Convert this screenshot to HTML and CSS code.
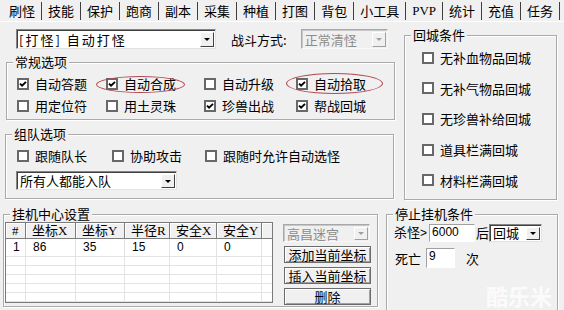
FILE: index.html
```html
<!DOCTYPE html>
<html lang="zh-CN">
<head>
  <meta charset="UTF-8">
  <title>刷怪设置</title>
  <link rel="stylesheet" href="styles.css">
</head>
<body>

<div class="window">
  <div class="tabs">
    <span class="tab active">刷怪</span>
    <span class="tab">技能</span>
    <span class="tab">保护</span>
    <span class="tab">跑商</span>
    <span class="tab">副本</span>
    <span class="tab">采集</span>
    <span class="tab">种植</span>
    <span class="tab">打图</span>
    <span class="tab">背包</span>
    <span class="tab">小工具</span>
    <span class="tab latin">PVP</span>
    <span class="tab">统计</span>
    <span class="tab">充值</span>
    <span class="tab">任务</span>
  </div>

  <div class="upper">
    <div class="left-col">
      <div class="fight-row">
        <div class="combo main-mode"><span class="val">[打怪]&nbsp;自动打怪</span><span class="drop"></span></div>
        <span class="fight-label">战斗方式:</span>
        <div class="combo off fight-mode"><span class="val">正常清怪</span><span class="drop"></span></div>
      </div>

      <fieldset class="group normal">
        <legend>常规选项</legend>
        <div class="opt-grid">
          <label class="chk"><span class="box on"><svg viewBox="0 0 8 8"><path d="M1 3.6 3.1 5.7 7 1.8"/></svg></span>自动答题</label>
          <label class="chk mark-a"><span class="box on"><svg viewBox="0 0 8 8"><path d="M1 3.6 3.1 5.7 7 1.8"/></svg></span>自动合成</label>
          <label class="chk"><span class="box"></span>自动升级</label>
          <label class="chk mark-b"><span class="box on"><svg viewBox="0 0 8 8"><path d="M1 3.6 3.1 5.7 7 1.8"/></svg></span>自动拾取</label>
          <label class="chk"><span class="box"></span>用定位符</label>
          <label class="chk"><span class="box"></span>用土灵珠</label>
          <label class="chk"><span class="box on"><svg viewBox="0 0 8 8"><path d="M1 3.6 3.1 5.7 7 1.8"/></svg></span>珍兽出战</label>
          <label class="chk"><span class="box on"><svg viewBox="0 0 8 8"><path d="M1 3.6 3.1 5.7 7 1.8"/></svg></span>帮战回城</label>
        </div>
      </fieldset>

      <fieldset class="group team">
        <legend>组队选项</legend>
        <div class="team-body">
          <div class="team-grid">
            <label class="chk"><span class="box"></span>跟随队长</label>
            <label class="chk"><span class="box"></span>协助攻击</label>
            <label class="chk"><span class="box"></span>跟随时允许自动选怪</label>
          </div>
          <div class="combo team-mode"><span class="val">所有人都能入队</span><span class="drop"></span></div>
        </div>
      </fieldset>
    </div>

    <fieldset class="group back">
      <legend>回城条件</legend>
      <div class="back-list">
        <label class="chk"><span class="box"></span>无补血物品回城</label>
        <label class="chk"><span class="box"></span>无补气物品回城</label>
        <label class="chk"><span class="box"></span>无珍兽补给回城</label>
        <label class="chk"><span class="box"></span>道具栏满回城</label>
        <label class="chk"><span class="box"></span>材料栏满回城</label>
      </div>
    </fieldset>
  </div>

  <div class="lower">
    <fieldset class="group hang">
      <legend>挂机中心设置</legend>
      <div class="hang-body">
        <div class="list">
          <div class="list-row head">
            <span>#</span><span>坐标X</span><span>坐标Y</span><span>半径R</span><span>安全X</span><span>安全Y</span><span></span>
          </div>
          <div class="list-row item">
            <span>1</span><span>86</span><span>35</span><span>15</span><span>0</span><span>0</span><span></span>
          </div>
          <div class="list-row fill">
            <span></span><span></span><span></span><span></span><span></span><span></span><span></span>
          </div>
        </div>
        <div class="hang-side">
          <div class="combo off map"><span class="val">高昌迷宫</span><span class="drop"></span></div>
          <button class="btn">添加当前坐标</button>
          <button class="btn">插入当前坐标</button>
          <button class="btn">删除</button>
        </div>
      </div>
    </fieldset>

    <fieldset class="group stop">
      <legend>停止挂机条件</legend>
      <div class="stop-row kill">
        <span class="kill-label">杀怪<span class="gt">&gt;</span></span>
        <span class="field kill-count">6000</span>
        <span class="after">后</span>
        <div class="combo then"><span class="val">回城</span><span class="drop"></span></div>
      </div>
      <div class="stop-row death">
        <span>死亡</span>
        <span class="field death-count">9</span>
        <span class="times">次</span>
      </div>
    </fieldset>
  </div>

  <div class="watermark">酷乐米</div>
</div>

</body>
</html>
```

FILE: styles.css
```css
* {
  box-sizing: border-box;
}
body {
  margin: 0;
  font-family: "Noto Sans CJK SC", "Noto Sans", sans-serif;
  font-size: 13px;
  line-height: 13px;
  color: #000;
  background: #f0f0f0;
}
.window {
  position: relative;
  width: 564px;
  height: 310px;
  overflow: hidden;
}

/* tab strip */
.tabs {
  display: flex;
  height: 22px;
  border-bottom: 1px solid #fff;
}
.tab {
  margin-top: 2px;
  height: 18px;
  line-height: 18px;
  padding: 0 6px;
  border-right: 1px solid #3f3f3f;
  white-space: nowrap;
}
.tab.active {
  padding-left: 9px;
}
.tab.latin {
  font-family: "Liberation Serif", serif;
}

/* group boxes */
.group {
  margin: 0;
  padding: 0;
  min-width: 0;
  border: 1px solid #aaaaaa;
  box-shadow: inset 1px 1px 0 #fff, 1px 1px 0 #fff;
}
.group legend {
  margin-left: 6px;
  padding: 0 2px;
  height: 14px;
  line-height: 14px;
  background: #f0f0f0;
}

/* checkboxes */
.chk {
  position: relative;
  justify-self: start;
  display: flex;
  align-items: center;
  gap: 6px;
  height: 13px;
  white-space: nowrap;
}
.box {
  flex: none;
  display: flex;
  width: 12px;
  height: 12px;
  border: 2px solid #686868;
  background: #fff;
}
.box svg {
  width: 8px;
  height: 8px;
  fill: none;
  stroke: #000;
  stroke-width: 1.9;
}
.mark-a::after,
.mark-b::after {
  content: "";
  position: absolute;
  border: 1px solid #b24a4f;
  border-radius: 50%;
}
.mark-a::after {
  left: -10px;
  right: -9px;
  top: -1px;
  bottom: -3px;
}
.mark-b::after {
  left: -10px;
  right: -17px;
  top: -4px;
  bottom: -4px;
}

/* combo boxes */
.combo {
  display: flex;
  flex: none;
  background: #fff;
  border: 1px solid;
  border-color: #848484 #e2e2e2 #e2e2e2 #848484;
  box-shadow: inset 1px 1px 0 #404040;
}
.combo .val {
  flex: 1;
  display: flex;
  align-items: center;
  padding-left: 3px;
  white-space: nowrap;
  overflow: hidden;
}
.combo .drop {
  flex: none;
  display: flex;
  align-items: center;
  justify-content: center;
  width: 14px;
  margin: 2px 1px 1px 0;
  background: #f0f0f0;
  border: 1px solid;
  border-color: #fff #404040 #404040 #fff;
}
.combo .drop::before {
  content: "";
  border-left: 3px solid transparent;
  border-right: 3px solid transparent;
  border-top: 3px solid #000;
}
.combo.off {
  background: #f0f0f0;
  color: #8c8c8c;
  border-color: #a8a8a8 #f8f8f8 #f8f8f8 #a8a8a8;
  box-shadow: inset 1px 1px 0 #c8c8c8;
}
.combo.off .drop {
  border-color: #fff #a0a0a0 #a0a0a0 #fff;
}
.combo.off .drop::before {
  border-top-color: #a0a0a0;
}

/* upper part */
.upper {
  display: flex;
  align-items: flex-start;
}
.left-col {
  width: 395px;
}
.fight-row {
  display: flex;
  align-items: center;
  height: 20px;
  margin-top: 7px;
  padding-left: 16px;
}
.main-mode {
  width: 200px;
  height: 20px;
}
.main-mode .val {
  padding-left: 2px;
  letter-spacing: 2px;
}
.fight-label {
  margin-left: 15px;
}
.fight-mode {
  width: 87px;
  height: 20px;
  margin-left: 14px;
}

.normal {
  width: 389px;
  height: 65px;
  margin: 6px 0 0 6px;
}
.opt-grid {
  display: grid;
  grid-template-columns: 89px 98px 92px auto;
  row-gap: 9px;
  padding: 8px 0 0 10px;
}

.team {
  width: 389px;
  height: 72px;
  margin: 7px 0 0 5px;
}
.team-body {
  padding: 8px 0 0 11px;
}
.team-grid {
  display: grid;
  grid-template-columns: 95px 93px auto;
}
.team-mode {
  width: 161px;
  height: 19px;
  margin: 9px 0 0 -1px;
}

.back {
  width: 153px;
  height: 172px;
  margin: 6px 0 0 9px;
}
.back-list {
  display: flex;
  flex-direction: column;
  gap: 17.7px;
  padding: 9px 0 0 17px;
}

/* lower part */
.lower {
  display: flex;
  align-items: flex-start;
  margin-top: 7px;
}
.hang {
  width: 375px;
  height: 100px;
  margin-left: 3px;
}
.hang-body {
  display: flex;
  gap: 10px;
  padding: 1px 0 0 1px;
}
.list {
  display: flex;
  flex-direction: column;
  width: 268px;
  height: 81px;
  background: #fff;
  border: 1px solid #7a7a7a;
}
.list-row {
  display: grid;
  grid-template-columns: 20px 50px 49px 45px 47px 45px 1fr;
}
.list-row span {
  padding-left: 6px;
  white-space: nowrap;
}
.head {
  height: 16px;
}
.head span {
  display: flex;
  align-items: center;
  background: #f0f0f0;
  border-right: 1px solid #7c7c7c;
  border-bottom: 1px solid #7c7c7c;
  box-shadow: inset 1px 1px 0 #fff;
  font-family: "Liberation Serif", "Noto Sans CJK SC", serif;
}
.head span:last-child {
  border-right: none;
}
.item {
  height: 18px;
}
.item span {
  display: flex;
  align-items: center;
  padding-left: 7px;
  border-bottom: 1px solid #e3e3e3;
  font-family: "Liberation Sans", sans-serif;
  font-size: 12px;
}
.fill {
  flex: 1;
  background: repeating-linear-gradient(#fff 0 8px, #e3e3e3 8px 9px);
}
.fill span,
.item span {
  border-right: 1px solid #e3e3e3;
}
.fill span:last-child,
.item span:last-child {
  border-right: none;
}

.hang-side {
  display: flex;
  flex-direction: column;
  gap: 4px;
  width: 88px;
  padding-top: 2px;
}
.map {
  width: 87px;
  height: 18px;
}
.btn {
  width: 87px;
  height: 17px;
  margin: 0 0 0 1px;
  padding: 0;
  font: inherit;
  line-height: 13px;
  color: #000;
  background: #f0f0f0;
  border: 1px solid #6b6b6b;
  box-shadow: inset 1px 1px 0 #fff, inset -1px -1px 0 #a0a0a0;
}

.stop {
  width: 172px;
  height: 110px;
  margin-left: 8px;
}
.stop-row {
  display: flex;
  align-items: center;
}
.kill {
  height: 19px;
  margin-top: 2px;
  padding-left: 7px;
}
.kill-label {
  white-space: nowrap;
}
.gt {
  font-family: "Liberation Sans", sans-serif;
  font-size: 12px;
}
.death {
  height: 20px;
  margin-top: 6px;
  padding-left: 8px;
}
.field {
  display: block;
  background: #fff;
  border: 1px solid;
  border-color: #a0a0a0 #fff #fff #a0a0a0;
  padding-left: 2px;
  font-family: "Liberation Sans", sans-serif;
  font-size: 12px;
  line-height: 15px;
}
.kill-count {
  width: 46px;
  height: 18px;
  margin-left: 2px;
}
.after {
  margin-left: 1px;
}
.then {
  width: 53px;
  height: 18px;
}
.death-count {
  width: 29px;
  height: 20px;
  margin-left: 5px;
}
.times {
  margin-left: 11px;
}

.watermark {
  position: absolute;
  right: 12px;
  bottom: 1px;
  font-size: 22px;
  line-height: 28px;
  font-weight: bold;
  color: rgba(255, 255, 255, 0.8);
}
```
